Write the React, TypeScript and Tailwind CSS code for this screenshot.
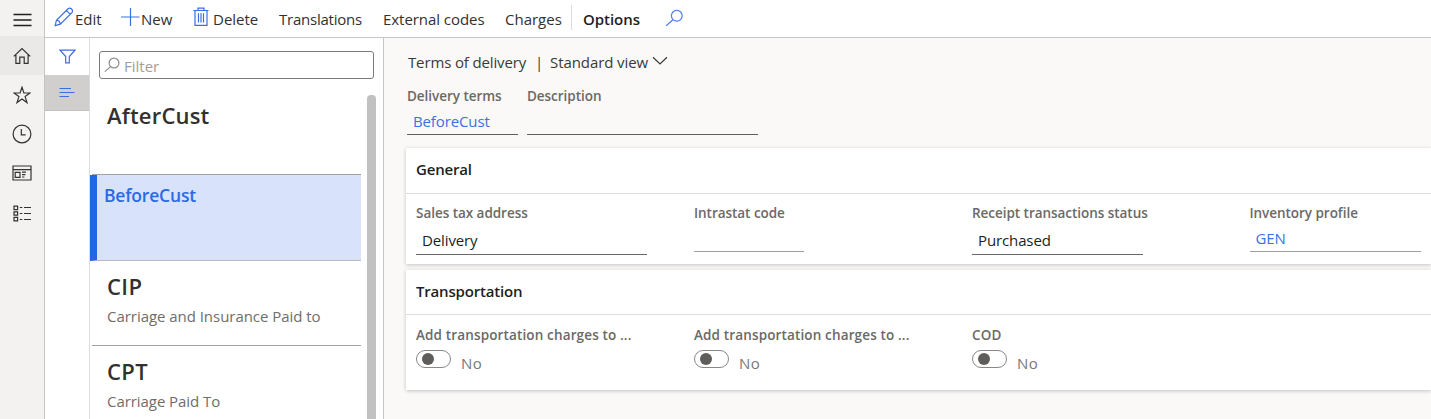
import type { ReactNode } from "react";

function Icon({ w, h, className, children }: { w: number; h: number; className?: string; children: ReactNode }) {
  return (
    <svg width={w} height={h} viewBox={`0 0 ${w} ${h}`} fill="none" stroke="currentColor" strokeWidth="1.2" className={`block shrink-0 ${className ?? ""}`}>
      {children}
    </svg>
  );
}

function Rail() {
  const cell = "flex h-[39px] items-center justify-center";
  return (
    <nav className="flex w-[45px] shrink-0 flex-col border-r border-[#c4c4c4] bg-[#f3f2f1] text-[#333231]">
      <div className="flex h-[36px] items-center justify-center pt-[3px] text-[#201f1e]">
        <Icon w={19} h={14}><path d="M0.5 1.5H18.5M0.5 7H18.5M0.5 12.5H18.5" strokeWidth="1.5" /></Icon>
      </div>
      <div className={`${cell} bg-[#eae9e8] pt-px`}>
        <Icon w={18} h={18}>
          <path d="M0.8 9.4L9 1.6L17.2 9.4M2.9 8V16.4H6.8V10.2H11.2V16.4H15.1V8" />
        </Icon>
      </div>
      <div className={cell}>
        <Icon w={18} h={18}>
          <path d="M9 1.2L10.9 7H17L12.1 10.6L14 16.6L9 12.9L4 16.6L5.9 10.6L1 7H7.1Z" />
        </Icon>
      </div>
      <div className={cell}>
        <Icon w={20} h={20}>
          <circle cx="10" cy="10" r="8.9" />
          <path d="M9.3 5V10.8H13.6" />
        </Icon>
      </div>
      <div className={cell}>
        <Icon w={20} h={16}>
          <path d="M1 1H19V15H1ZM1 4.6H19M3.2 7.4H8V12.4H3.2ZM10 7.2H14M10 9.6H13.4M10 12H12.4" />
        </Icon>
      </div>
      <div className={`${cell} pt-[3px]`}>
        <Icon w={19} h={17}>
          <path d="M1 1.2H4.6V4.6H1ZM1 6.8H4.6V10.2H1ZM1 12.4H4.6V15.8H1Z" />
          <path d="M6.8 2.5H9.4M11 2.5H18M6.8 8.5H9.4M11 8.5H18M6.8 14.5H9.4M11 14.5H18" />
        </Icon>
      </div>
    </nav>
  );
}

function Toolbar() {
  return (
    <header className="flex h-[38px] shrink-0 items-center border-b border-[#c8c6c4] bg-white pl-[9px] text-[15px] leading-[20px] text-[#323130]">
      <div className="flex w-[66px] items-center">
        <Icon w={20} h={20} className="-mt-[3px] text-[#3b6ee3]">
          <path d="M1.2 18.6L2.4 13.2L14.1 1.7Q15.9 0.4 17.6 2Q19.2 3.7 17.9 5.6L6.3 17.2ZM12.4 3.4L16.2 7.3M2.4 13.2Q5.8 13.6 6.3 17.2" />
        </Icon>
        <span className="ml-px">Edit</span>
      </div>
      <div className="flex w-[73px] items-center">
        <Icon w={20} h={20} className="-mt-[3px] text-[#3b6ee3]"><path d="M10.5 1V19M1 10H19.5" /></Icon>
        <span className="ml-px">New</span>
      </div>
      <div className="flex w-[86px] items-center">
        <Icon w={16} h={20} className="-mt-[3px] text-[#3b6ee3]">
          <path d="M0.5 3.5H15.5M5 3.4V1.2H11V3.4M2 3.5V18.3H14V3.5M5.5 6.2V15.6M8 6.2V15.6M10.5 6.2V15.6" />
        </Icon>
        <span className="ml-1">Delete</span>
      </div>
      <span className="w-[104px] tracking-[-0.23px]">Translations</span>
      <span className="w-[122px] tracking-[-0.05px]">External codes</span>
      <span className="w-[66px]">Charges</span>
      <span className="-mt-[3px] h-[25px] w-[12px] border-l border-[#dddbd9]" />
      <span className="w-[82px] font-semibold tracking-[-0.05px] text-[#201f1e]">Options</span>
      <Icon w={19} h={18} className="-mt-[2px] text-[#4f7df0]">
        <circle cx="11.8" cy="6.8" r="5.4" />
        <path d="M7.9 10.8L1.2 16.8" />
      </Icon>
    </header>
  );
}

function ListPane() {
  return (
    <section className="flex w-[294px] shrink-0 flex-col border-r border-[#c8c6c4] bg-white">
      <div className="ml-[9px] mt-[13px] flex h-[28px] w-[275px] shrink-0 items-center rounded-[3px] border border-[#7d7b79] pl-[4px] text-[#8f8d8b]">
        <Icon w={16} h={16} className="-mt-[1px]">
          <circle cx="10" cy="6" r="4.9" />
          <path d="M6.5 9.6L0.8 14.6" />
        </Icon>
        <span className="ml-[4px] pt-[2px] text-[15px] leading-[20px] text-[#a09e9c]">Filter</span>
      </div>
      <div className="flex min-h-0 flex-1">
        <div className="w-[271px] shrink-0">
          <div className="ml-[2px] h-[96px] border-b border-[#a3a2a1] pl-[15px] pt-[21px] text-[22px] font-semibold leading-[30px] tracking-[0.2px] text-[#323130]">AfterCust</div>
          <div className="h-[86px] border-b border-l-[7px] border-b-[#b4b9c4] border-l-[#2266e3] bg-[#d8e3fb] pl-[7px] pt-[8px] text-[17.5px] font-semibold leading-[24px] tracking-[-0.2px] text-[#2b6ae6]">BeforeCust</div>
          <div className="ml-[2px] h-[85px] border-b border-[#a3a2a1] pl-[15px] pt-[10px]">
            <div className="text-[22px] font-semibold leading-[30px] tracking-[0.4px] text-[#323130]">CIP</div>
            <div className="pt-[5px] text-[15px] leading-[20px] tracking-[-0.04px] text-[#6f6d6b]">Carriage and Insurance Paid to</div>
          </div>
          <div className="ml-[2px] pl-[15px] pt-[10px]">
            <div className="text-[22px] font-semibold leading-[30px] tracking-[0.4px] text-[#323130]">CPT</div>
            <div className="pt-[5px] text-[15px] leading-[20px] tracking-[-0.06px] text-[#6f6d6b]">Carriage Paid To</div>
          </div>
        </div>
        <div className="ml-[6px] mt-[16px] w-[9px] rounded-t-[4px] bg-[#c1c1c1]" />
      </div>
    </section>
  );
}

type FieldProps = { label: string; value?: string; link?: boolean; line: string };

function Field({ label, value, link, line }: FieldProps) {
  return (
    <div>
      <div className="text-[13.5px] font-semibold leading-[20px] tracking-[-0.04px] text-[#6b6967]">{label}</div>
      <div className={`pl-[6px] text-[15px] tracking-[-0.12px] ${link ? "text-[#3d6fe6]" : "text-[#201f1e]"} ${line}`}>{value}</div>
    </div>
  );
}

function Toggle({ label }: { label: string }) {
  return (
    <div>
      <div className="whitespace-nowrap text-[13.5px] font-semibold leading-[20px] tracking-[0.14px] text-[#6b6967]">{label}</div>
      <div className="mt-[5px] flex items-start">
        <span className="flex h-[18px] w-[35px] items-center rounded-full border border-[#8a8886] pl-[5px]">
          <span className="h-[12px] w-[12px] rounded-full bg-[#5f5d5b]" />
        </span>
        <span className="ml-[10px] pt-[3px] text-[15px] leading-[20px] tracking-[0.4px] text-[#797775]">No</span>
      </div>
    </div>
  );
}

function Card({ title, className, head, body, children }: { title: string; className: string; head: string; body: string; children: ReactNode }) {
  return (
    <div className={`ml-[22px] bg-white shadow-[0_1px_4px_rgba(0,0,0,0.22)] ${className}`}>
      <div className={`border-b border-[#dddcdb] pl-[10px] pt-[11px] text-[15px] font-semibold leading-[20px] tracking-[-0.18px] text-[#201f1e] ${head}`}>{title}</div>
      <div className={`grid grid-cols-[278px_278px_277.5px_172px] pl-[10px] ${body}`}>{children}</div>
    </div>
  );
}

export default function App() {
  return (
    <div className="flex h-[419px] w-[1431px] overflow-hidden bg-white font-['Open_Sans','Noto_Sans',sans-serif]">
      <Rail />
      <div className="flex min-w-0 flex-1 flex-col">
        <Toolbar />
        <div className="flex min-h-0 flex-1">
          <aside className="w-[45px] shrink-0 border-r border-[#dcdbda] bg-white text-[#3b6ee3]">
            <div className="flex h-[37px] items-center justify-center">
              <Icon w={17} h={15}><path d="M1 1.2H16L10.3 7.6V13.8H6.7V7.6Z" /></Icon>
            </div>
            <div className="flex h-[36px] items-center justify-center border-b border-[#c4c3c2] bg-[#d0cfce]">
              <Icon w={16} h={12}><path d="M0.5 1.5H12M0.5 5.5H15.5M0.5 9.5H10" strokeWidth="1" /></Icon>
            </div>
          </aside>
          <ListPane />
          <main className="min-w-0 flex-1 overflow-hidden bg-[#faf9f8]">
            <div className="flex items-center pl-[24px] pt-[14px] text-[15px] leading-[20px] text-[#3b3a39]">
              <span className="w-[127px] tracking-[-0.14px]">Terms of delivery</span>
              <span className="w-[15px]">|</span>
              <span className="whitespace-nowrap tracking-[-0.08px]">Standard view</span>
              <Icon w={16} h={10} className="ml-[4px] -mt-[2px]"><path d="M1 1.2L8 8L15 1.2" /></Icon>
            </div>
            <div className="flex pl-[23px] pt-[14px]">
              <div className="w-[120px]">
                <Field label="Delivery terms" value="BeforeCust" link line="h-[29px] w-[111px] border-b border-[#605e5c] leading-[30px]" />
              </div>
              <Field label="Description" line="h-[29px] w-[231px] border-b border-[#605e5c]" />
            </div>
            <Card title="General" className="mt-[13px] h-[116px]" head="h-[46px]" body="pt-[9px]">
              <Field label="Sales tax address" value="Delivery" line="h-[32px] w-[231px] border-b border-[#6b6967] leading-[35px]" />
              <Field label="Intrastat code" line="h-[29px] w-[110px] border-b border-[#a09f9e]" />
              <Field label="Receipt transactions status" value="Purchased" line="h-[32px] w-[171px] border-b border-[#6b6967] leading-[35px]" />
              <Field label="Inventory profile" value="GEN" link line="h-[29px] w-[171px] border-b border-[#a09f9e] leading-[30px]" />
            </Card>
            <Card title="Transportation" className="mt-[6px] h-[120px]" head="h-[45px]" body="pt-[10px]">
              <Toggle label="Add transportation charges to ..." />
              <Toggle label="Add transportation charges to ..." />
              <Toggle label="COD" />
            </Card>
          </main>
        </div>
      </div>
    </div>
  );
}
